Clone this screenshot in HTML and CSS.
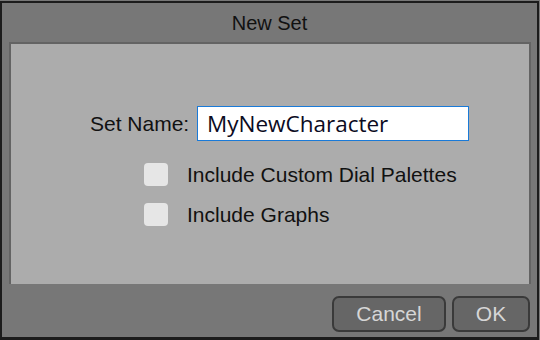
FILE: index.html
```html
<!DOCTYPE html>
<html lang="en">
<head>
    <meta charset="UTF-8">
    <meta name="viewport" content="width=device-width, initial-scale=1.0">
    <title>New Set</title>
    <link rel="stylesheet" href="styles.css">
</head>
<body>
    <div class="dialog">
        <!-- Title bar -->
        <div class="dialog-title">New Set</div>

        <!-- Main panel -->
        <div class="panel">
            <div class="name-row">
                <label for="set_name" class="name-label">Set Name:</label>
                <input type="text" id="set_name" class="name-input" value="MyNewCharacter">
            </div>

            <div class="check-row">
                <span class="check-box"></span>
                <span class="check-label">Include Custom Dial Palettes</span>
            </div>
            <div class="check-row">
                <span class="check-box"></span>
                <span class="check-label">Include Graphs</span>
            </div>
        </div>

        <!-- Buttons -->
        <div class="dialog-buttons">
            <button class="btn btn-cancel">Cancel</button>
            <button class="btn btn-ok">OK</button>
        </div>
    </div>
</body>
</html>
```

FILE: styles.css
```css
body {
    margin: 0;
    padding-top: 1px;
    background-color: #777777;
    font-family: "Liberation Sans", Arial, sans-serif;
    color: #111;
}

.dialog {
    width: 539px;
    height: 339px;
    box-sizing: border-box;
    border: 2px solid #1c1c1c;
    border-bottom-width: 3px;
    background-color: #777777;
    display: flex;
    flex-direction: column;
}

.dialog-title {
    height: 39px;
    display: flex;
    align-items: center;
    justify-content: center;
    font-size: 20px;
    padding-top: 1px;
    box-sizing: border-box;
}

.panel {
    height: 242px;
    margin: 0 6px 0 7px;
    box-sizing: border-box;
    background-color: #acacac;
    border: 2px solid #636363;
    border-bottom: none;
    padding-top: 62px;
}

.name-row {
    display: flex;
    align-items: center;
    padding-left: 79px;
}

.name-label {
    font-size: 21px;
    width: 107px;
}

.name-input {
    width: 272px;
    height: 35px;
    box-sizing: border-box;
    border: 1px solid #1a7ad8;
    background-color: white;
    padding: 0 0 0 9px;
    font-family: "Open Sans", "Noto Sans", sans-serif;
    font-size: 22.5px;
    color: #0b0b22;
    outline: none;
}

.check-row {
    display: flex;
    align-items: center;
    padding-left: 133px;
    height: 23px;
    margin-top: 17px;
}

.name-row + .check-row {
    margin-top: 22px;
}

.check-box {
    width: 24px;
    height: 23px;
    border-radius: 4px;
    background-color: #e6e6e6;
}

.check-label {
    font-size: 21px;
    margin-left: 19px;
}

.dialog-buttons {
    flex: 1;
    display: flex;
    justify-content: flex-end;
    gap: 6px;
    padding: 12px 7px 0 0;
}

.btn {
    height: 36px;
    box-sizing: border-box;
    background-color: #666666;
    border: 2px solid #3a3a3a;
    border-radius: 7px;
    color: #d6d6d6;
    font-family: "Liberation Sans", Arial, sans-serif;
    font-size: 21px;
    cursor: pointer;
}

.btn-cancel {
    width: 114px;
}

.btn-ok {
    width: 78px;
}
```
